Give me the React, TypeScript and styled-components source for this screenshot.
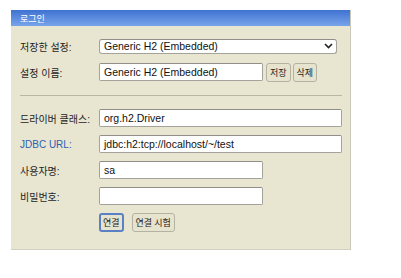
import React from 'react'
import styled, { createGlobalStyle } from 'styled-components'

const GlobalStyle = createGlobalStyle`
    body {
        margin: 0;
        background: #ffffff;
        font-family: "Liberation Sans", "Noto Sans CJK KR", sans-serif;
    }
`

const Panel = styled.div`
    margin: 10px 0 0 11px;
    width: 339px;
    background: #e8e5d1;
    border-right: 1px solid #c9c7b8;
    border-bottom: 1px solid #d2d0c2;
`

const Header = styled.div`
    height: 16px;
    padding-left: 9px;
    display: flex;
    align-items: center;
    background: linear-gradient(#3f72d2, #78a4ea);
    color: #ffffff;
    font-family: "Noto Sans CJK KR", sans-serif;
    font-size: 9px;
`

const Body = styled.div`
    padding: 7px 8px 14px 9px;
`

const Row = styled.div`
    height: 26px;
    display: flex;
    align-items: center;
`

const Label = styled.div<{ $link?: boolean }>`
    width: 79px;
    flex-shrink: 0;
    font-family: "Liberation Sans", "Noto Sans CJK KR", sans-serif;
    font-size: 10px;
    color: ${p => (p.$link ? '#2d5fb4' : '#1e1e1e')};
`

const Field = styled.div<{ $width: number }>`
    width: ${p => p.$width}px;
    height: 18px;
    box-sizing: border-box;
    padding: 0 4px;
    display: flex;
    align-items: center;
    background: #ffffff;
    border: 1px solid #a4a39b;
    border-top-color: #8f8e88;
    border-radius: 2px;
    font-size: 10.5px;
    color: #111111;
    white-space: nowrap;
    overflow: hidden;
`

const Dropdown = styled(Field)`
    height: 15px;
    justify-content: space-between;
    border-radius: 3px;
    padding-right: 3px;
`

const Divider = styled.div`
    height: 20px;
    display: flex;
    align-items: center;
    &::after {
        content: '';
        flex: 1;
        height: 1px;
        background: #b9b6a6;
    }
`

const Buttons = styled.div`
    margin-left: 3px;
    display: flex;
    align-items: center;
    gap: 2px;
`

const Button = styled.div<{ $primary?: boolean }>`
    height: 19px;
    box-sizing: border-box;
    padding: 0 ${p => (p.$primary ? '2px' : '3px')};
    display: flex;
    align-items: center;
    background: #e6e3cf;
    border: ${p => (p.$primary ? '2px solid #5b80c4' : '1px solid #b4b2a3')};
    border-radius: 3px;
    font-family: "Noto Sans CJK KR", sans-serif;
    font-size: 9px;
    color: #222222;
`

const ActionRow = styled(Row)`
    padding-left: 79px;
    gap: 8px;
`

const Chevron = () => (
    <svg width="9" height="6" viewBox="0 0 9 6">
        <path d="M1 1 L4.5 4.5 L8 1" fill="none" stroke="#222" strokeWidth="1.6" />
    </svg>
)

export default function App() {
    return <>
        <GlobalStyle />
        <Panel>
            <Header>로그인</Header>
            <Body>
                <Row>
                    <Label>저장한 설정:</Label>
                    <Dropdown $width={238}>Generic H2 (Embedded)<Chevron /></Dropdown>
                </Row>
                <Row>
                    <Label>설정 이름:</Label>
                    <Field $width={164}>Generic H2 (Embedded)</Field>
                    <Buttons>
                        <Button>저장</Button>
                        <Button>삭제</Button>
                    </Buttons>
                </Row>
                <Divider />
                <Row>
                    <Label>드라이버 클래스:</Label>
                    <Field $width={244}>org.h2.Driver</Field>
                </Row>
                <Row>
                    <Label $link>JDBC URL:</Label>
                    <Field $width={244}>jdbc:h2:tcp://localhost/~/test</Field>
                </Row>
                <Row>
                    <Label>사용자명:</Label>
                    <Field $width={164}>sa</Field>
                </Row>
                <Row>
                    <Label>비밀번호:</Label>
                    <Field $width={164}></Field>
                </Row>
                <ActionRow>
                    <Button $primary>연결</Button>
                    <Button>연결 시험</Button>
                </ActionRow>
            </Body>
        </Panel>
    </>
}
